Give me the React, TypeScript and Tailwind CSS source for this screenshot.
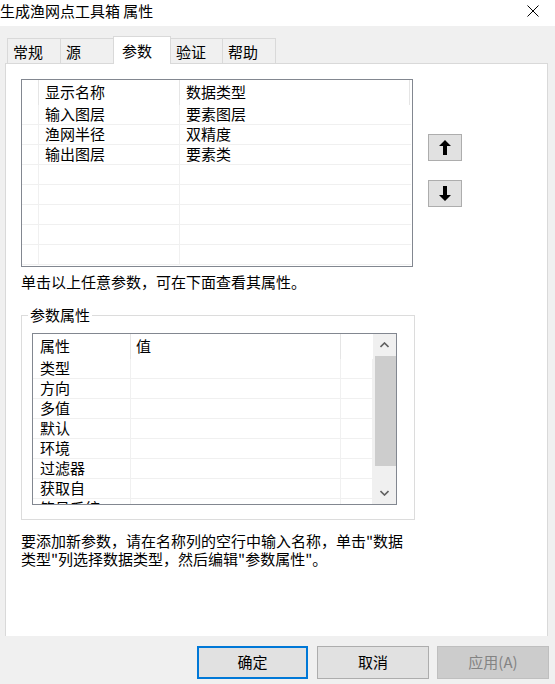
import React from "react";

const paramRows = [
  ["输入图层", "要素图层"],
  ["渔网半径", "双精度"],
  ["输出图层", "要素类"],
  ["", ""],
  ["", ""],
  ["", ""],
  ["", ""],
  ["", ""],
];

const propRows = ["类型", "方向", "多值", "默认", "环境", "过滤器", "获取自", "符号系统"];

function ArrowUp() {
  return (
    <svg width="12" height="15" viewBox="0 0 12 15">
      <polygon points="6,0 12,6 8,6 8,15 4,15 4,6 0,6" fill="#000" />
    </svg>
  );
}

function ArrowDown() {
  return (
    <svg width="12" height="15" viewBox="0 0 12 15">
      <polygon points="4,0 8,0 8,9 12,9 6,15 0,9 4,9" fill="#000" />
    </svg>
  );
}

function ParamTable() {
  return (
    <div className="w-[392px] h-[188px] border border-[#828790] bg-white overflow-hidden">
      {/* header */}
      <div className="flex h-[25px] leading-[24px]">
        <div className="w-[17px] border-r border-[#e5e5e5]" />
        <div className="w-[141px] border-r border-[#e5e5e5] pl-[6px]">显示名称</div>
        <div className="w-[230px] border-r border-[#e5e5e5] pl-[6px]">数据类型</div>
      </div>
      {paramRows.map((r, i) => (
        <div key={i} className="flex w-[389px] h-[20px] border-b border-[#f0f0f0] leading-[17px]">
          <div className="w-[17px] border-r border-[#f0f0f0]" />
          <div className="w-[141px] border-r border-[#f0f0f0] pl-[6px]">{r[0]}</div>
          <div className="w-[230px] pl-[6px]">{r[1]}</div>
        </div>
      ))}
    </div>
  );
}

function PropGrid() {
  return (
    <div className="flex w-[365px] h-[172px] border border-[#828790] bg-white overflow-hidden">
      <div className="w-[340px] flex flex-col">
        <div className="flex h-[25px] leading-[24px] shrink-0">
          <div className="w-[98px] border-r border-[#e5e5e5] pl-[7px]">属性</div>
          <div className="w-[210px] border-r border-[#e5e5e5] pl-[5px]">值</div>
          <div className="w-[32px]" />
        </div>
        {propRows.map((p) => (
          <div key={p} className="flex h-[20px] shrink-0 border-b border-[#f0f0f0] leading-[17px]">
            <div className="w-[98px] border-r border-[#f0f0f0] pl-[7px]">{p}</div>
            <div className="w-[210px] border-r border-[#f0f0f0]" />
            <div className="w-[32px] border-r border-[#f0f0f0]" />
          </div>
        ))}
      </div>
      {/* scrollbar */}
      <div className="w-[23px] bg-[#f0f0f0] flex flex-col">
        <div className="h-[22px] flex items-center justify-center">
          <svg width="9" height="6" viewBox="0 0 9 6">
            <polyline points="0.5,5 4.5,1 8.5,5" fill="none" stroke="#606060" strokeWidth="1.6" />
          </svg>
        </div>
        <div className="h-[110px] ml-[2px] bg-[#cdcdcd]" />
        <div className="flex-1" />
        <div className="h-[22px] flex items-center justify-center">
          <svg width="9" height="6" viewBox="0 0 9 6">
            <polyline points="0.5,1 4.5,5 8.5,1" fill="none" stroke="#606060" strokeWidth="1.6" />
          </svg>
        </div>
      </div>
    </div>
  );
}

export default function App() {
  const tabs = [
    { label: "常规", w: "w-[54px]", active: false },
    { label: "源", w: "w-[54px]", active: false },
    { label: "参数", w: "w-[58px]", active: true },
    { label: "验证", w: "w-[53px]", active: false },
    { label: "帮助", w: "w-[54px]", active: false },
  ];

  return (
    <div className="w-[555px] h-[684px] bg-[#f0f0f0] flex flex-col text-[15px] text-black font-['Noto_Sans_CJK_SC','Noto_Sans',sans-serif] overflow-hidden">
      {/* title bar */}
      <div className="h-[26px] bg-white flex items-start justify-between shrink-0">
        <div className="pt-[1px] leading-[19px]">生成渔网点工具箱 属性</div>
        <svg className="mt-[5px] mr-[16px]" width="12" height="12" viewBox="0 0 12 12">
          <path d="M0.5 0.5 L11.5 11.5 M11.5 0.5 L0.5 11.5" stroke="#000" strokeWidth="1" />
        </svg>
      </div>

      {/* tabs */}
      <div className="mt-[10px] h-[27px] flex items-end pl-[7px] relative z-10 shrink-0">
        {tabs.map((t, i) =>
          t.active ? (
            <div
              key={t.label}
              className={`${t.w} ${i > 0 ? "-ml-px" : ""} h-[28px] -mb-px bg-white border border-b-0 border-[#d9d9d9] pl-[8px] flex items-center leading-[19px] relative z-10`}
            >
              {t.label}
            </div>
          ) : (
            <div
              key={t.label}
              className={`${t.w} ${i > 0 ? "-ml-px" : ""} h-[25px] bg-[#f0f0f0] border border-b-0 border-[#d9d9d9] pl-[5px] flex items-center leading-[19px]`}
            >
              {t.label}
            </div>
          )
        )}
      </div>

      {/* tab panel */}
      <div className="flex-1 ml-[5px] w-[543px] bg-white border border-b-0 border-[#d9d9d9] pl-[15px] pt-[15px]">
        <div className="flex">
          <ParamTable />
          <div className="ml-[15px] flex flex-col">
            <button className="mt-[55px] w-[34px] h-[27px] bg-[#e1e1e1] border border-[#adadad] flex items-center justify-center">
              <ArrowUp />
            </button>
            <button className="mt-[19px] w-[34px] h-[27px] bg-[#e1e1e1] border border-[#adadad] flex items-center justify-center">
              <ArrowDown />
            </button>
          </div>
        </div>

        <div className="mt-[6px] leading-[18px]">单击以上任意参数，可在下面查看其属性。</div>

        <div className="relative mt-[24px] w-[394px] h-[205px] border border-[#dcdcdc] pl-[10px] pt-[17px]">
          <div className="absolute left-[6px] top-[-11px] bg-white px-[2px] leading-[19px]">参数属性</div>
          <PropGrid />
        </div>

        <div className="mt-[12px] leading-[18px]">
          要添加新参数，请在名称列的空行中输入名称，单击"数据
          <br />
          类型"列选择数据类型，然后编辑"参数属性"。
        </div>
      </div>

      {/* buttons */}
      <div className="mt-[10px] mb-[5px] h-[33px] flex justify-end pr-[6px] shrink-0">
        <button className="w-[111px] h-[33px] bg-[#e1e1e1] border-2 border-[#0078d7]">确定</button>
        <button className="ml-[9px] w-[112px] h-[33px] bg-[#e1e1e1] border border-[#adadad]">取消</button>
        <button className="ml-[8px] w-[112px] h-[33px] bg-[#cccccc] border border-[#bfbfbf] text-[#838383]">应用(A)</button>
      </div>
    </div>
  );
}
